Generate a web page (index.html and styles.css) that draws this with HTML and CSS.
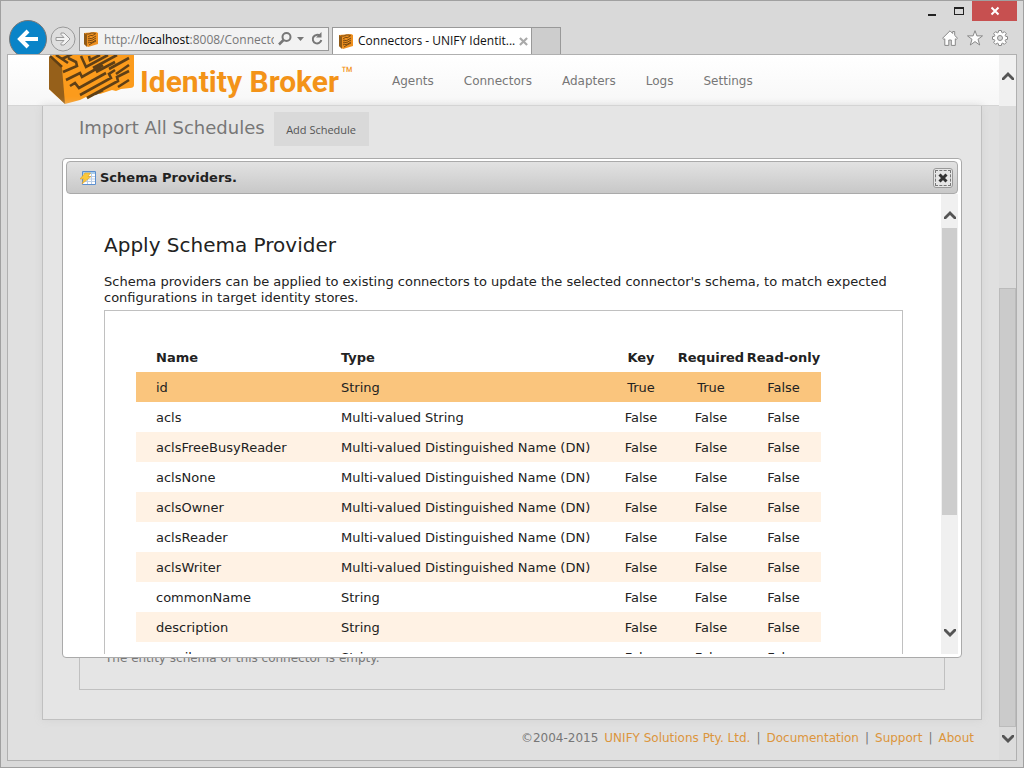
FILE: index.html
```html
<!DOCTYPE html>
<html lang="en">
<head>
<meta charset="utf-8">
<title>Connectors - UNIFY Identity Broker</title>
<link rel="stylesheet" href="styles.css">
</head>
<body>
<svg class="defs" aria-hidden="true">
  <symbol id="cube" viewBox="0 0 16 16">
    <path d="M1 2 13 1l2 1v11L5 16l-4-3z" fill="#ee9020"/>
    <path d="M1 2l3 2v12l-3-3z" fill="#8f5a17"/>
    <path d="M3 3h3l2-1h3l2 1M5 6l3-2 1 1 3-2M5 8l2-1 1 1 5-3M5 10l2-1 1 1 5-3M5 12l2-1 1 1 5-3M6 14l3-2 4-2" fill="none" stroke="#7a4a10"/>
  </symbol>
  <symbol id="chevron" viewBox="0 0 12 8">
    <path d="M0 6 6 0l6 6v2h-2L6 4 2 8H0z" fill="#555"/>
  </symbol>
</svg>
<div class="window">
  <header class="chrome">
    <div class="address-area">
      <button class="nav-back" aria-label="Back"><svg viewBox="0 0 36 36"><path d="M28 18H11M18 10l-8 8 8 8" fill="none" stroke="#fff" stroke-width="4"/></svg></button>
      <button class="nav-forward" aria-label="Forward"><svg viewBox="0 0 26 26"><circle cx="13" cy="13" r="12" fill="#dedede" stroke="#999"/><path d="M6 11.500h8l-3-3V7h3l6 6-6 6h-3v-1.500l3-3H6z" fill="#f3f3f3" stroke="#999"/></svg></button>
      <div class="address">
        <svg class="favicon"><use href="#cube"/></svg>
        <span class="url" title="Address">http://<b>localhost</b>:8008/Connectors</span>
        <button class="tool search" aria-label="Search"><svg viewBox="0 0 14 14"><circle cx="8.500" cy="5" r="4" fill="none" stroke="#777" stroke-width="2"/><path d="M5.500 8 1 12.500" stroke="#777" stroke-width="2.500"/></svg></button>
        <button class="tool caret" aria-label="Show history"><svg viewBox="0 0 7 4"><path d="M0 0h7L3.500 4z" fill="#777"/></svg></button>
        <button class="tool reload" aria-label="Refresh"><svg viewBox="0 0 12 14"><path d="M9 4A4.300 4.300 0 1 0 10.300 8" fill="none" stroke="#777" stroke-width="2"/><path d="M5 5.500h5.500V0z" fill="#777"/></svg></button>
      </div>
      <div class="tab">
        <svg class="favicon"><use href="#cube"/></svg>
        <span>Connectors - UNIFY Identit...</span>
        <button class="tool tab-close" aria-label="Close tab"><svg viewBox="0 0 10 10"><path d="M1 1l8 8M9 1 1 9" stroke="#aaa" stroke-width="2.400"/></svg></button>
      </div>
      <button class="new-tab" aria-label="New tab"></button>
    </div>
    <div class="window-side">
      <div class="window-buttons">
        <button aria-label="Minimize"><svg viewBox="0 0 10 10"><path d="M1 8h8v2H1z" fill="#222"/></svg></button>
        <button aria-label="Maximize"><svg viewBox="0 0 10 10"><path d="M0 1h10v8H0zM1 3v5h8V3z" fill="#222" fill-rule="evenodd"/></svg></button>
        <button class="window-close" aria-label="Close"><svg viewBox="0 0 10 10"><path d="M1.500 1.500l7 7M8.500 1.500l-7 7" stroke="#fff" stroke-width="2"/></svg></button>
      </div>
      <div class="browser-tools">
        <button aria-label="Home"><svg viewBox="0 0 16 16"><path d="M8 .8.600 8.200 2 9.500l.8-.7v6.600h4V10h2.500v5.400h4V8.800l.8.700 1.400-1.300-2.800-2.800V1.500h-2v2z" fill="#fdfdfd" stroke="#888"/></svg></button>
        <button aria-label="Favorites"><svg viewBox="0 0 16 16"><path d="M8 .7l1.900 5.200h5.600L11 9.300l1.700 5.700L8 11.600 3.300 15 5 9.300.5 5.900h5.600z" fill="#fdfdfd" stroke="#888"/></svg></button>
        <button aria-label="Tools"><svg viewBox="0 0 16 16"><path d="M6.700.5h2.600l.4 1.900 1 .4 1.700-1.100 1.900 1.900-1.100 1.700.4 1 1.900.4v2.600l-1.900.4-.4 1 1.100 1.700-1.900 1.900-1.700-1.100-1 .4-.4 1.900H6.700l-.4-1.900-1-.4-1.700 1.100-1.900-1.900 1.100-1.700-.4-1-1.900-.4V6.700l1.900-.4.400-1-1.100-1.700 1.900-1.900 1.700 1.100 1-.4z" fill="#fdfdfd" stroke="#888"/><circle cx="8" cy="8" r="2.500" fill="#d9d9d9" stroke="#888"/></svg></button>
      </div>
    </div>
  </header>
  <div class="viewport">
    <div class="page">
      <header class="site-header">
        <svg class="logo" viewBox="0 0 86 50" aria-hidden="true">
          <path d="M0 2 4 0h81v30q0 3-4 3l-9 1-5 2-4-1-12 4-3-1-9 5-2-1-6 3-15 4L0 34z" fill="#fb9b1c"/>
          <path d="M0 2 13 13l3 36L0 34z" fill="#96601a"/>
          <path d="M1 1l12 11M7 0l12 8M14 17l14-6-1-4-8-4M13 4l10-5M17 25l14-7 2 4 21-12M21 31l5-3 4 5 27-15M32 1l5 11 22-12M40 1l1 4 10-5M31 40l31-17-2-4 6-4M38 43l31-17-1-4 12-6M44 13l24-13M47 17l19-10M60 14l20-11M67 19l13-9M46 39l8-4M69 32l11-7" fill="none" stroke="#5e3f16" stroke-width="2.600"/>
        </svg>
        <div class="brand">Identity Broker<sup>™</sup></div>
        <nav class="menu"><a href="#">Agents</a><a href="#">Connectors</a><a href="#">Adapters</a><a href="#">Logs</a><a href="#">Settings</a></nav>
      </header>
      <main class="content">
        <div class="schedules"><h2>Import All Schedules</h2><button>Add Schedule</button></div>
        <section class="schema"><p>The entity schema of this connector is empty.</p></section>
      </main>
      <footer class="footer"><span>©2004-2015</span><a href="#">UNIFY Solutions Pty. Ltd.</a><span>|</span><a href="#">Documentation</a><span>|</span><a href="#">Support</a><span>|</span><a href="#">About</a></footer>
      <section class="dialog" role="dialog" aria-labelledby="dialog-title">
        <div class="dialog-bar">
          <svg class="dialog-icon" viewBox="0 0 16 14"><path d="M2.500.5h13v13h-13z" fill="#fff" stroke="#5b8fd0"/><path d="M3 1h12v2H3z" fill="#a9cdec"/><path d="M3 5.500h12M3 8h12M3 10.500h12M7.500 3v10M11.500 3v10" stroke="#b9cde6"/><path d="M5 2h5.500L8 5.500h3L2 13l2-5H0z" fill="#fbc93d" stroke="#dda02c" stroke-width=".6"/></svg>
          <h1 id="dialog-title">Schema Providers.</h1>
          <button class="dialog-close" aria-label="Close dialog"><svg viewBox="0 0 10 10"><path d="M1.500 1.500l7 7M8.500 1.500l-7 7" stroke="#333" stroke-width="3"/></svg></button>
        </div>
        <div class="dialog-view">
          <div class="dialog-body">
            <h2>Apply Schema Provider</h2>
            <p>Schema providers can be applied to existing connectors to update the selected connector's schema, to match expected configurations in target identity stores.</p>
            <div class="table-box">
              <table>
                <thead><tr><th class="name">Name</th><th class="type">Type</th><th class="key">Key</th><th class="required">Required</th><th class="read">Read-only</th></tr></thead>
                <tbody>
                  <tr class="selected"><td>id</td><td>String</td><td>True</td><td>True</td><td>False</td></tr>
                  <tr><td>acls</td><td>Multi-valued String</td><td>False</td><td>False</td><td>False</td></tr>
                  <tr><td>aclsFreeBusyReader</td><td>Multi-valued Distinguished Name (DN)</td><td>False</td><td>False</td><td>False</td></tr>
                  <tr><td>aclsNone</td><td>Multi-valued Distinguished Name (DN)</td><td>False</td><td>False</td><td>False</td></tr>
                  <tr><td>aclsOwner</td><td>Multi-valued Distinguished Name (DN)</td><td>False</td><td>False</td><td>False</td></tr>
                  <tr><td>aclsReader</td><td>Multi-valued Distinguished Name (DN)</td><td>False</td><td>False</td><td>False</td></tr>
                  <tr><td>aclsWriter</td><td>Multi-valued Distinguished Name (DN)</td><td>False</td><td>False</td><td>False</td></tr>
                  <tr><td>commonName</td><td>String</td><td>False</td><td>False</td><td>False</td></tr>
                  <tr><td>description</td><td>String</td><td>False</td><td>False</td><td>False</td></tr>
                  <tr><td>email</td><td>String</td><td>False</td><td>False</td><td>False</td></tr>
                </tbody>
              </table>
            </div>
          </div>
          <div class="scrollbar inner"><svg class="arrow"><use href="#chevron"/></svg><div class="track"><div class="thumb"></div></div><svg class="arrow down"><use href="#chevron"/></svg></div>
        </div>
      </section>
    </div>
    <div class="scrollbar outer"><svg class="arrow"><use href="#chevron"/></svg><div class="track"><div class="thumb"></div></div><svg class="arrow down"><use href="#chevron"/></svg></div>
  </div>
</div>
</body>
</html>
```
FILE: styles.css
```css
* { box-sizing: border-box; }
body { margin: 0; font: 13px/16px Verdana, "DejaVu Sans", sans-serif; color: #222; }
button { font: inherit; color: inherit; border: 0; padding: 0; background: none; display: flex; align-items: center; justify-content: center; }
svg { display: block; flex: none; }
h1, h2, p { margin: 0; font-weight: normal; }
a { color: inherit; text-decoration: none; }
.defs { position: absolute; width: 0; height: 0; }

.window { height: 100vh; display: flex; flex-direction: column; background: #d9d9d9; border: 1px solid #a0a0a0; padding: 0 6px 6px; overflow: hidden; }
.chrome { height: 53px; flex: none; display: flex; justify-content: space-between; font-family: "Segoe UI", "Open Sans", sans-serif; font-size: 12px; }
.address-area { display: flex; align-items: flex-end; min-width: 0; }
.nav-back { width: 38px; height: 38px; margin: 0 3px -4px 2px; background: #0a84c8; border: 1px solid #777; border-radius: 50%; }
.nav-back svg { width: 36px; height: 36px; }
.nav-forward { width: 26px; height: 26px; margin: 0 3px 2px 0; }
.nav-forward svg { width: 26px; height: 26px; }
.address { width: 250px; height: 24px; margin: 0 3px 3px 0; padding: 0 5px 0 3px; display: flex; align-items: center; background: #f2f2f2; border: 1px solid #999; }
.favicon { width: 16px; height: 16px; }
.url { flex: 1; min-width: 0; margin: 0 4px 0 5px; padding-top: 1px; overflow: hidden; white-space: nowrap; color: #777; }
.url b { font-weight: normal; color: #000; }
.tool { flex: none; }
.search svg { width: 14px; height: 14px; }
.caret { margin: 0 7px 0 5px; }
.caret svg { width: 7px; height: 4px; }
.reload svg { width: 12px; height: 14px; }
.tab { width: 200px; height: 27px; padding: 0 6px 0 5px; display: flex; align-items: center; gap: 4px; background: #fff; border: 1px solid #999; border-bottom: 0; color: #111; white-space: nowrap; }
.tab-close { margin-left: auto; }
.tab-close svg { width: 9px; height: 9px; }
.new-tab { width: 29px; height: 27px; background: #cdcdcd; border: 1px solid #999; border-width: 1px 1px 0 0; }
.window-side { display: flex; flex-direction: column; align-items: flex-end; gap: 9px; }
.window-buttons { display: flex; height: 20px; }
.window-buttons button { width: 27px; }
.window-buttons svg { width: 10px; height: 10px; }
.window-buttons .window-close { width: 45px; background: #c75050; }
.browser-tools { display: flex; gap: 9px; padding-right: 9px; }
.browser-tools svg { width: 16px; height: 16px; }

.viewport { flex: 1; min-height: 0; display: flex; border: 1px solid #b0b0b0; background: #e0e0e0; position: relative; }
.page { flex: 1; min-width: 0; display: flex; flex-direction: column; position: relative; }
.site-header { height: 51px; flex: none; display: flex; background: linear-gradient(#fff, #f7f7f7); border-bottom: 1px solid #d5d5d5; padding-left: 41px; color: #777; }
.logo { width: 86px; height: 50px; }
.brand { width: 221px; margin-left: 5px; padding-top: 9px; font: bold 30px/36px Roboto, sans-serif; color: #f39318; white-space: nowrap; }
.brand sup { margin-left: 2px; font-size: 20px; line-height: 16px; font-weight: normal; }
.menu { display: flex; gap: 30px; padding: 18px 0 0 31px; font-size: 12px; }
.content { flex: 1; margin: 0 17px 0 34px; padding: 6px 36px 29px; display: flex; flex-direction: column; justify-content: space-between; background: #e5e5e5; border: 1px solid #c0c0c0; border-top: 0; box-shadow: 0 0 8px #d3d3d3; color: #777; }
.schedules { display: flex; gap: 9px; }
.schedules h2 { font-size: 18px; line-height: 32px; }
.schedules button { width: 95px; height: 34px; background: #d9d9d9; font: 11px "Open Sans", sans-serif; color: #555; }
.schema { height: 160px; padding: 0 25px 23px; border: 1px solid #c0c0c0; display: flex; align-items: flex-end; font-size: 12px; }
.footer { flex: none; height: 40px; padding: 10px 25px 0 0; display: flex; justify-content: flex-end; gap: 6px; font-size: 12px; color: #777; }
.footer a { color: #dc953c; }

.dialog { position: absolute; left: 54px; right: 37px; top: 103px; bottom: 102px; display: flex; flex-direction: column; padding: 2px 3px 3px; background: #fff; border: 1px solid #aaa; border-radius: 4px; }
.dialog-bar { flex: none; height: 33px; display: flex; align-items: center; padding: 0 4px 0 13px; background: linear-gradient(#e2e2e2, #c8c8c8); border: 1px solid #aaa; border-radius: 4px; }
.dialog-icon { width: 16px; height: 14px; }
.dialog-bar h1 { margin-left: 4px; font-size: 13px; font-weight: bold; }
.dialog-close { width: 20px; height: 20px; margin-left: auto; background: #e6e6e6; border: 1px solid #999; border-radius: 3px; outline: 1px dashed #777; outline-offset: -3px; }
.dialog-close svg { width: 10px; height: 10px; }
.dialog-view { flex: 1; min-height: 0; display: flex; }
.dialog-body { flex: 1; min-width: 0; overflow: hidden; padding: 38px 38px 0; }
.dialog-body h2 { font-size: 20px; line-height: 26px; margin-bottom: 16px; }
.table-box { height: 420px; margin-top: 4px; padding: 31px; border: 1px solid #c0c0c0; }
table { width: 685px; border-collapse: collapse; table-layout: fixed; }
th, td { height: 30px; padding: 2px 0 0; text-align: center; white-space: nowrap; }
th:nth-child(-n+2), td:nth-child(-n+2) { text-align: left; }
th:first-child, td:first-child { padding-left: 20px; }
.name { width: 205px; }
.type { width: 265px; }
.key { width: 70px; }
.required { width: 70px; }
.read { width: 75px; }
tbody tr:nth-child(odd) { background: #fff2e4; }
tbody .selected:nth-child(odd) { background: #fac57d; }

.scrollbar { flex: none; width: 17px; display: flex; flex-direction: column; align-items: center; background: #f0f0f0; }
.arrow { width: 12px; height: 8px; }
.down { transform: rotate(180deg); }
.track { flex: 1; align-self: stretch; display: flex; flex-direction: column; }
.thumb { background: #cdcdcd; margin: 0 1px; }
.inner { padding: 17px 0 17px; }
.inner .track { padding: 9px 0 8px; }
.inner .thumb { height: 73%; }
.outer { padding: 17px 0 17px; background: linear-gradient(#f0f0f0 51px, #dcdcdc 51px); }
.outer .track { justify-content: flex-end; padding-bottom: 8px; }
.outer .thumb { height: 439px; margin: 0; border: 1px solid #bbb; background: #cbcbcb; }
```
